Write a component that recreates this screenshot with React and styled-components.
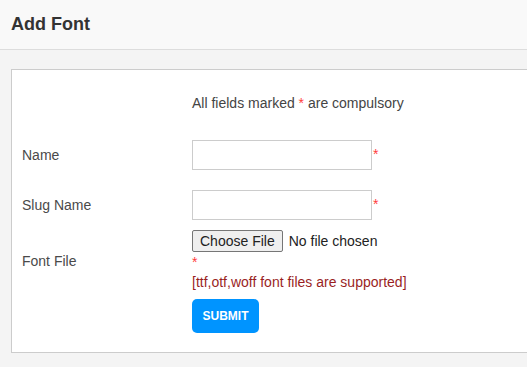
import React from "react";
import styled, { createGlobalStyle } from "styled-components";

const Global = createGlobalStyle`
  html, body { margin: 0; padding: 0; }
  body {
    background: #f4f4f4;
    font-family: "Liberation Sans", Arial, sans-serif;
    color: #444;
    overflow: hidden;
  }
`;

const Page = styled.div`
  width: 527px;
  height: 367px;
  overflow: hidden;
  background: #f4f4f4;
`;

const Header = styled.header`
  height: 49px;
  background: #f9f9f9;
  border-bottom: 1px solid #dddddd;
  display: flex;
  align-items: center;
  padding-left: 11px;
  box-sizing: content-box;
`;

const Title = styled.h1`
  margin: 0;
  font-size: 18px;
  font-weight: bold;
  color: #333;
`;

const Card = styled.section`
  margin: 19px -20px 0 11px;
  background: #fff;
  border: 1px solid #cccccc;
  padding: 23px 10px 19px 10px;
  display: flex;
  flex-direction: column;
`;

const Row = styled.div`
  display: grid;
  grid-template-columns: 170px 1fr;
  align-items: center;
  margin-top: ${(p) => p.$mt || 0}px;
`;

const Label = styled.label`
  font-size: 14px;
  color: #4a4a4a;
`;

const Notice = styled.div`
  font-size: 14px;
  line-height: 20px;
  color: #444;
`;

const Star = styled.span`
  color: #ff3b3b;
  font-size: 14px;
`;

const FieldWrap = styled.div`
  display: flex;
  align-items: center;
`;

const TextInput = styled.input`
  width: 180px;
  height: 30px;
  box-sizing: border-box;
  border: 1px solid #cccccc;
  margin: 0;
  padding: 4px 6px;
  font-family: inherit;
  font-size: 14px;
  outline: none;
`;

const StarAfter = styled(Star)`
  margin-left: 1px;
  line-height: 1;
  position: relative;
  top: -1px;
`;

const FileColumn = styled.div`
  display: flex;
  flex-direction: column;
`;

const FileInput = styled.input`
  font-family: "Liberation Sans", Arial, sans-serif;
  font-size: 14px;
  color: #222;
  margin: 0;
  height: 22px;
  &::file-selector-button {
    font-family: "Liberation Sans", Arial, sans-serif;
    font-size: 14px;
    color: #222;
    height: 22px;
    margin-right: 6px;
    padding: 1px 7px;
    border: 1px solid #767676;
    border-radius: 2px;
    background: #efefef;
  }
`;

const StarLine = styled.div`
  color: #ff3b3b;
  font-size: 14px;
  line-height: 20px;
`;

const Hint = styled.div`
  color: #9a1f1f;
  font-size: 14px;
  line-height: 20px;
`;

const SubmitButton = styled.button`
  width: 67px;
  height: 34px;
  background: #0094ff;
  border: none;
  border-radius: 5px;
  color: #fff;
  font-family: "Liberation Sans", Arial, sans-serif;
  font-weight: bold;
  font-size: 12px;
  padding: 0;
  cursor: pointer;
`;

export default function App() {
  return (
    <Page>
      <Global />
      <Header>
        <Title>Add Font</Title>
      </Header>
      <Card>
        <Row>
          <span />
          <Notice>
            All fields marked <Star>*</Star> are compulsory
          </Notice>
        </Row>
        <Row $mt={27}>
          <Label>Name</Label>
          <FieldWrap>
            <TextInput type="text" />
            <StarAfter>*</StarAfter>
          </FieldWrap>
        </Row>
        <Row $mt={20}>
          <Label>Slug Name</Label>
          <FieldWrap>
            <TextInput type="text" />
            <StarAfter>*</StarAfter>
          </FieldWrap>
        </Row>
        <Row $mt={10}>
          <Label>Font File</Label>
          <FileColumn>
            <FileInput type="file" />
            <StarLine>*</StarLine>
            <Hint>[ttf,otf,woff font files are supported]</Hint>
          </FileColumn>
        </Row>
        <Row $mt={7}>
          <span />
          <div>
            <SubmitButton type="button">SUBMIT</SubmitButton>
          </div>
        </Row>
      </Card>
    </Page>
  );
}
